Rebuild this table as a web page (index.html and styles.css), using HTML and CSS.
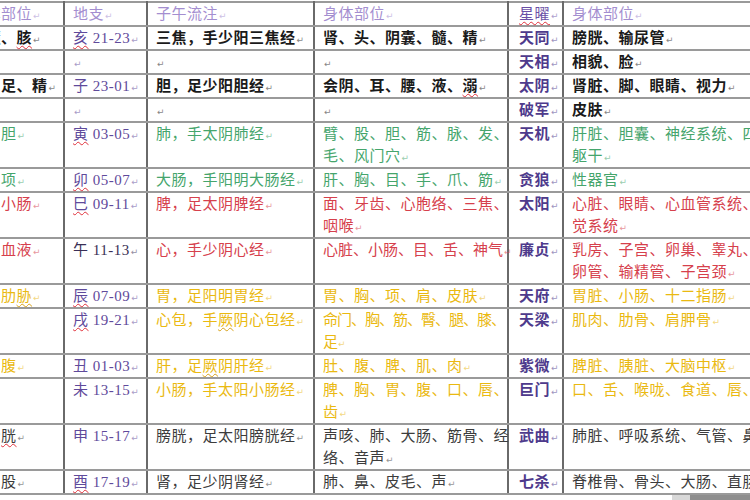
FILE: index.html
```html
<!DOCTYPE html>
<html lang="zh-CN">
<head>
<meta charset="utf-8">
<title>地支 星曜 身体部位</title>
<link rel="stylesheet" href="styles.css">
</head>
<body>
<div class="sheet">
<table class="grid">
<colgroup>
<col class="w1"><col class="w2"><col class="w3"><col class="w4"><col class="w5"><col class="w6">
</colgroup>
<tr class="head">
<td>身体部位<i>↵</i></td>
<td>地支<i>↵</i></td>
<td>子午流注<i>↵</i></td>
<td>身体部位<i>↵</i></td>
<td class="star"><span class="sp">星曜</span><i>↵</i></td>
<td>身体部位<i>↵</i></td>
</tr>
<tr class="k">
<td>精髓、<span class="sp">胲</span><i>↵</i></td>
<td class="zhi"><span class="sp">亥</span> 21-23<i>↵</i></td>
<td>三焦，手少阳三焦经<i>↵</i></td>
<td>肾、头、阴囊、髓、精<i>↵</i></td>
<td class="star">天同<i>↵</i></td>
<td>膀胱、输尿管<i>↵</i></td>
</tr>
<tr class="k">
<td></td>
<td class="zhi"><i>↵</i></td>
<td><i>↵</i></td>
<td><i>↵</i></td>
<td class="star">天相<i>↵</i></td>
<td>相貌、脸<i>↵</i></td>
</tr>
<tr class="k">
<td>阴、足、精<i>↵</i></td>
<td class="zhi">子 23-01<i>↵</i></td>
<td>胆，足少阳胆经<i>↵</i></td>
<td>会阴、耳、腰、液、<span class="sp">溺</span><i>↵</i></td>
<td class="star">太阴<i>↵</i></td>
<td>肾脏、脚、眼睛、视力<i>↵</i></td>
</tr>
<tr class="k">
<td></td>
<td class="zhi"><i>↵</i></td>
<td><i>↵</i></td>
<td><i>↵</i></td>
<td class="star">破军<i>↵</i></td>
<td>皮肤<i>↵</i></td>
</tr>
<tr class="g">
<td>肝、胆<i>↵</i></td>
<td class="zhi"><span class="sp">寅</span> 03-05<i>↵</i></td>
<td>肺，手太阴肺经<i>↵</i></td>
<td>臂、股、胆、筋、脉、发、<br>毛、风门穴<i>↵</i></td>
<td class="star">天机<i>↵</i></td>
<td>肝脏、胆囊、神经系统、四肢、<br>躯干<i>↵</i></td>
</tr>
<tr class="g">
<td>颈、项<i>↵</i></td>
<td class="zhi"><span class="sp">卯</span> 05-07<i>↵</i></td>
<td>大肠，手阳明大肠经<i>↵</i></td>
<td>肝、胸、目、手、爪、筋<i>↵</i></td>
<td class="star">贪狼<i>↵</i></td>
<td>性器官<i>↵</i></td>
</tr>
<tr class="r">
<td>心、小肠<i>↵</i></td>
<td class="zhi"><span class="sp">巳</span> 09-11<i>↵</i></td>
<td>脾，足太阴脾经<i>↵</i></td>
<td>面、牙齿、心胞络、三焦、<br>咽喉<i>↵</i></td>
<td class="star">太阳<i>↵</i></td>
<td>心脏、眼睛、心血管系统、视<br>觉系统<i>↵</i></td>
</tr>
<tr class="r">
<td>心、血液<i>↵</i></td>
<td class="zhi dark">午 11-13<i>↵</i></td>
<td>心，手少阴心经<i>↵</i></td>
<td class="tight">心脏、小肠、目、舌、神气<i>↵</i></td>
<td class="star">廉贞<i>↵</i></td>
<td>乳房、子宫、卵巢、睾丸、输<br>卵管、输精管、子宫颈<i>↵</i></td>
</tr>
<tr class="y">
<td>胸、肋<span class="sp sp-y">胁</span><i>↵</i></td>
<td class="zhi"><span class="sp">辰</span> 07-09<i>↵</i></td>
<td>胃，足阳明胃经<i>↵</i></td>
<td>胃、胸、项、肩、皮肤<i>↵</i></td>
<td class="star">天府<i>↵</i></td>
<td>胃脏、小肠、十二指肠<i>↵</i></td>
</tr>
<tr class="y">
<td></td>
<td class="zhi"><span class="sp">戌</span> 19-21<i>↵</i></td>
<td>心包，手<span class="sp sp-y">厥</span>阴心包经<i>↵</i></td>
<td class="tighter">命门、胸、筋、臀、腿、膝、<br>足<i>↵</i></td>
<td class="star">天梁<i>↵</i></td>
<td>肌肉、肋骨、肩胛骨<i>↵</i></td>
</tr>
<tr class="y">
<td>胸、腹<i>↵</i></td>
<td class="zhi">丑 01-03<i>↵</i></td>
<td>肝，足<span class="sp sp-y">厥</span>阴肝经<i>↵</i></td>
<td>肚、腹、脾、肌、肉<i>↵</i></td>
<td class="star">紫微<i>↵</i></td>
<td>脾脏、胰脏、大脑中枢<i>↵</i></td>
</tr>
<tr class="y">
<td></td>
<td class="zhi">未 13-15<i>↵</i></td>
<td>小肠，手太阳小肠经<i>↵</i></td>
<td>脾、胸、胃、腹、口、唇、<br>齿<i>↵</i></td>
<td class="star">巨门<i>↵</i></td>
<td>口、舌、喉咙、食道、唇、齿<i>↵</i></td>
</tr>
<tr class="n">
<td>腰膀<span class="sp">胱</span><i>↵</i></td>
<td class="zhi">申 15-17<i>↵</i></td>
<td>膀胱，足太阳膀胱经<i>↵</i></td>
<td>声咳、肺、大肠、筋骨、经<br>络、音声<i>↵</i></td>
<td class="star">武曲<i>↵</i></td>
<td>肺脏、呼吸系统、气管、鼻子<i>↵</i></td>
</tr>
<tr class="n">
<td>腿、股<i>↵</i></td>
<td class="zhi"><span class="sp">酉</span> 17-19<i>↵</i></td>
<td>肾，足少阴肾经<i>↵</i></td>
<td>肺、鼻、皮毛、声<i>↵</i></td>
<td class="star">七杀<i>↵</i></td>
<td>脊椎骨、骨头、大肠、直肠<i>↵</i></td>
</tr>
</table>
<div class="scroll"></div>
</div>
</body>
</html>
```

FILE: styles.css
```css
html, body {
  margin: 0;
  padding: 0;
  background: #ffffff;
}

.sheet {
  position: relative;
  width: 750px;
  height: 500px;
  overflow: hidden;
  background: #ffffff;
}

.grid {
  border-collapse: collapse;
  table-layout: fixed;
  width: 862px;
  margin: 1px 0 0 -40px;
  font-family: "Liberation Serif", "Noto Sans CJK SC", serif;
  font-size: 15px;
  letter-spacing: 0.5px;
  line-height: 22px;
  color: #1e1e1e;
}

.w1 { width: 103px; }
.w2 { width: 83px; }
.w3 { width: 167px; }
.w4 { width: 194px; }
.w5 { width: 55px; }
.w6 { width: 260px; }

.grid td {
  border-top: 2px solid #9a9a9a;
  border-bottom: 2px solid #9a9a9a;
  border-left: 2px solid #6a6a6a;
  border-right: 2px solid #6a6a6a;
  padding: 0 0 0 8px;
  height: 21px;
  vertical-align: top;
  white-space: nowrap;
  overflow: visible;
}

.grid span {
  line-height: 0;
}

.grid i {
  font-style: normal;
  font-weight: 400;
  font-family: "DejaVu Sans", sans-serif;
  font-size: 9px;
  line-height: 0;
  letter-spacing: 0;
  opacity: 0.55;
  margin-left: 1px;
}

.grid td.tight { letter-spacing: 0; }
.grid td.tighter { letter-spacing: -1px; }

.head td { color: #a48ed0; }

.k td { color: #1a1a1a; font-weight: 700; }
.g td { color: #45a56c; }
.r td { color: #d6404c; }
.y td { color: #eab911; }
.n td { color: #3c3c3c; }

.grid td.zhi { color: #5f4a9b; font-weight: 400; }
.grid td.zhi.dark { color: #3a2f55; }
.grid td.star {
  color: #4e3a8c;
  font-weight: 700;
  padding-left: 10px;
}
.head td.star { color: #6a4fa6; font-weight: 400; }

.sp {
  text-decoration: underline wavy #e0303a;
  text-decoration-thickness: 1px;
  text-underline-offset: 2px;
}
.sp-y { text-decoration-color: #d7a21a; }

.scroll {
  position: absolute;
  left: 672px;
  top: 495px;
  width: 78px;
  height: 5px;
  background: linear-gradient(90deg, #d8d8d8 0, #d8d8d8 18px, #8e8e8e 18px);
}
```
